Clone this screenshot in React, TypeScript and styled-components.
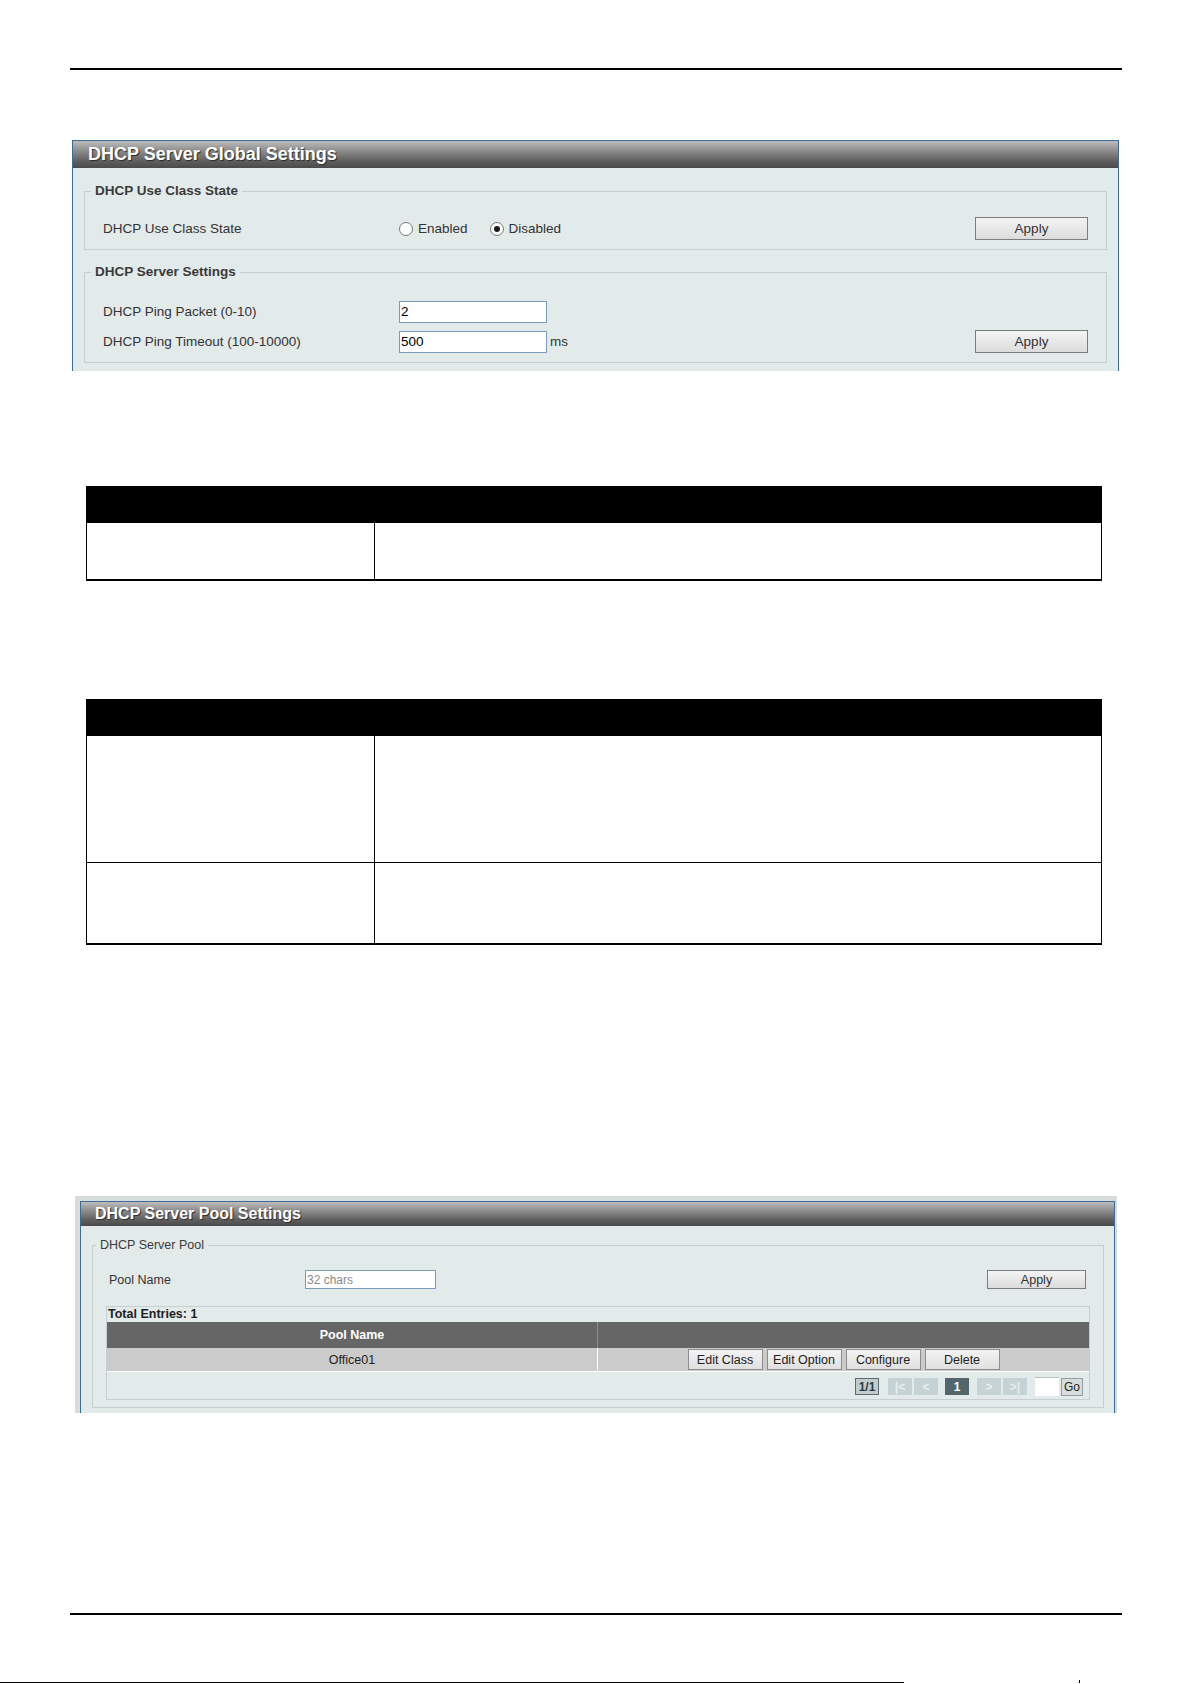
import React from 'react';
import styled, { createGlobalStyle } from 'styled-components';

const GlobalStyle = createGlobalStyle`
  html,
  body {
    margin: 0;
    padding: 0;
    background: #ffffff;
  }
  body {
    font-family: 'Liberation Sans', Arial, sans-serif;
    color: #333333;
  }
`;

/* page frame */
const Page = styled.div`
  width: 1192px;
  height: 1684px;
  display: flex;
  flex-direction: column;
  overflow: hidden;
`;

const Sheet = styled.div`
  flex: 1;
  display: flex;
  flex-direction: column;
  padding: 68px 70px 0;
`;

const Rule = styled.div<{ $top: number }>`
  height: 2px;
  margin-top: ${(p) => p.$top}px;
  background: #000000;
`;

const EdgeRow = styled.div`
  display: flex;
  align-items: flex-end;
  height: 4px;
  padding-bottom: 1px;
`;

const EdgeLine = styled.div`
  width: 904px;
  height: 1px;
  background: #000000;
`;

const EdgeTick = styled.div`
  width: 1px;
  height: 3px;
  margin-left: 175px;
  background: #000000;
`;

/* ---------- web ui panels ---------- */
const PanelFrame = styled.div<{ $top: number; $left: number; $width: number; $framed?: boolean }>`
  margin: ${(p) => p.$top}px 0 0 ${(p) => p.$left}px;
  width: ${(p) => p.$width}px;
  box-sizing: border-box;
  padding: ${(p) => (p.$framed ? '5px 2px 0 5px' : '0')};
  background: ${(p) => (p.$framed ? '#d9dcdc' : 'transparent')};
`;

const Panel = styled.section`
  border: 1px solid #3c6c96;
  border-bottom: none;
  background: #e3eaea;
`;

const PanelHeader = styled.div<{ $compact?: boolean }>`
  height: ${(p) => (p.$compact ? 24 : 27)}px;
  display: flex;
  align-items: center;
  padding-left: ${(p) => (p.$compact ? 14 : 15)}px;
  background: linear-gradient(to bottom, #bdbdbd 0%, #8e8e8e 35%, #5e5e5e 75%, #4a4a4a 100%);
  color: #ffffff;
  font-weight: 700;
  font-size: ${(p) => (p.$compact ? 16 : 18)}px;
  text-shadow: 1px 1px 1px #2a2a2a;
  white-space: nowrap;
`;

const PanelBody = styled.div<{ $compact?: boolean }>`
  padding: ${(p) => (p.$compact ? '12px 10px 5px 11px' : '15px 11px 8px 11px')};
`;

const Group = styled.fieldset<{ $compact?: boolean }>`
  margin: 0;
  padding: ${(p) => (p.$compact ? '0 0 7px 3px' : '0 0 9px 6px')};
  border: 1px solid #c4cfd2;
  min-width: 0;

  & + & {
    margin-top: 14px;
  }
`;

const Legend = styled.legend<{ $compact?: boolean }>`
  padding: 0 4px;
  font-size: ${(p) => (p.$compact ? 12.5 : 13.5)}px;
  font-weight: ${(p) => (p.$compact ? 400 : 700)};
  line-height: ${(p) => (p.$compact ? 15 : 16)}px;
  color: #3a3a3a;
`;

const FormRow = styled.div<{ $top: number; $label: number; $compact?: boolean }>`
  display: grid;
  grid-template-columns: ${(p) => p.$label}px 1fr auto;
  align-items: center;
  height: ${(p) => (p.$compact ? 19 : 23)}px;
  margin-top: ${(p) => p.$top}px;
  padding: ${(p) => (p.$compact ? '0 17px 0 13px' : '0 18px 0 12px')};
  font-size: ${(p) => (p.$compact ? 12.5 : 13.5)}px;
  color: #333333;
`;

const Controls = styled.div`
  display: flex;
  align-items: center;
`;

const RadioOption = styled.label`
  display: flex;
  align-items: center;
  gap: 5px;
  margin-right: 22px;
`;

const RadioDot = styled.span<{ $checked?: boolean }>`
  position: relative;
  width: 12px;
  height: 12px;
  border: 1px solid #7b7b7b;
  border-radius: 50%;
  background: radial-gradient(circle at 40% 35%, #ffffff 55%, #e6e6e6 100%);

  &::after {
    content: '';
    display: ${(p) => (p.$checked ? 'block' : 'none')};
    position: absolute;
    left: 3px;
    top: 3px;
    width: 6px;
    height: 6px;
    border-radius: 50%;
    background: #1a1a1a;
  }
`;

const TextBox = styled.div<{ $width: number; $compact?: boolean }>`
  width: ${(p) => p.$width}px;
  height: ${(p) => (p.$compact ? 19 : 22)}px;
  box-sizing: border-box;
  display: flex;
  align-items: center;
  padding-left: 1px;
  border: 1px solid #7a9cbc;
  background: #ffffff;
  color: ${(p) => (p.$compact ? '#8a8a8a' : '#000000')};
  font-size: ${(p) => (p.$compact ? 12 : 13.5)}px;
`;

const Unit = styled.span`
  margin-left: 3px;
`;

const ApplyButton = styled.button<{ $width: number; $compact?: boolean }>`
  width: ${(p) => p.$width}px;
  height: ${(p) => (p.$compact ? 19 : 23)}px;
  padding: 0;
  border: 1px solid #7c7c7c;
  background: linear-gradient(to bottom, #f4f4f4, #dcdcdc);
  font-family: inherit;
  font-size: ${(p) => (p.$compact ? 12.5 : 13.5)}px;
  color: #333333;
`;

/* ---------- document tables ---------- */
const DocTable = styled.table<{ $top: number }>`
  margin: ${(p) => p.$top}px 0 0 16px;
  width: 1016px;
  border-collapse: collapse;
  table-layout: fixed;
  border: 1px solid #000000;
  border-bottom-width: 2px;

  & th {
    height: 35px;
    padding: 0;
    background: #000000;
  }

  & td {
    padding: 0;
    border: 1px solid #000000;
  }
`;

const KeyColumn = styled.col`
  width: 288px;
`;

const DocRow = styled.tr<{ $height: number }>`
  height: ${(p) => p.$height}px;
`;

/* ---------- pool list ---------- */
const ListBox = styled.div`
  margin: 17px 13px 0 10px;
  border: 1px solid #c6d0d3;
  font-size: 12.5px;
`;

const TotalLine = styled.div`
  height: 15px;
  line-height: 15px;
  padding-left: 1px;
  font-weight: 700;
  color: #1e1e1e;
`;

const ListGrid = styled.div`
  display: grid;
  grid-template-columns: 490px 1fr;
`;

const HeadCell = styled.div<{ $divider?: boolean }>`
  height: 26px;
  display: flex;
  align-items: center;
  justify-content: center;
  background: #666666;
  border-left: ${(p) => (p.$divider ? '1px solid #8c8c8c' : 'none')};
  color: #ffffff;
  font-weight: 700;
`;

const DataCell = styled.div<{ $divider?: boolean }>`
  height: 23px;
  display: flex;
  align-items: center;
  justify-content: center;
  gap: 4px;
  background: #cbcbcb;
  border-left: ${(p) => (p.$divider ? '1px solid #ffffff' : 'none')};
  border-bottom: 1px solid #ffffff;
  color: #222222;
`;

const RowButton = styled.button`
  width: 75px;
  height: 21px;
  padding: 0;
  border: 1px solid #8d8d8d;
  background: linear-gradient(to bottom, #f3f3f3, #e0e0e0);
  font-family: inherit;
  font-size: 12.5px;
  color: #222222;
`;

const Pager = styled.div`
  display: flex;
  justify-content: flex-end;
  align-items: center;
  height: 27px;
  padding: 2px 6px 0 0;
  box-sizing: border-box;
`;

const PageBox = styled.span<{ $kind: 'count' | 'off' | 'current'; $gap: number }>`
  width: 24px;
  height: 17px;
  margin-left: ${(p) => p.$gap}px;
  box-sizing: border-box;
  display: flex;
  align-items: center;
  justify-content: center;
  font-size: 12px;
  font-weight: 700;
  background: ${(p) => (p.$kind === 'current' ? '#51676c' : p.$kind === 'count' ? '#c2ccce' : '#c6d3d6')};
  border: 1px solid ${(p) => (p.$kind === 'count' ? '#5d6c70' : 'transparent')};
  color: ${(p) => (p.$kind === 'current' ? '#ffffff' : p.$kind === 'count' ? '#2e3a3d' : '#e9efef')};
`;

const GoInput = styled.span`
  width: 24px;
  height: 19px;
  margin-left: 8px;
  box-sizing: border-box;
  background: #ffffff;
  border-top: 1px solid #b8c2c4;
`;

const GoButton = styled.span`
  width: 22px;
  height: 18px;
  margin-left: 2px;
  box-sizing: border-box;
  display: flex;
  align-items: center;
  justify-content: center;
  border: 1px solid #93a0a3;
  background: #d7dddd;
  font-size: 12px;
  color: #222222;
`;

const App = (): JSX.Element => {
  const actions = ['Edit Class', 'Edit Option', 'Configure', 'Delete'];

  return (
    <Page>
      <GlobalStyle />
      <Sheet>
        <Rule $top={0} />

        {/* 1. global settings */}
        <PanelFrame $top={70} $left={2} $width={1047}>
          <Panel>
            <PanelHeader>DHCP Server Global Settings</PanelHeader>
            <PanelBody>
              <Group>
                <Legend>DHCP Use Class State</Legend>
                <FormRow $top={18} $label={296}>
                  <span>DHCP Use Class State</span>
                  <Controls>
                    <RadioOption>
                      <RadioDot />
                      Enabled
                    </RadioOption>
                    <RadioOption>
                      <RadioDot $checked />
                      Disabled
                    </RadioOption>
                  </Controls>
                  <ApplyButton type="button" $width={113}>
                    Apply
                  </ApplyButton>
                </FormRow>
              </Group>

              <Group>
                <Legend>DHCP Server Settings</Legend>
                <FormRow $top={20} $label={296}>
                  <span>DHCP Ping Packet (0-10)</span>
                  <Controls>
                    <TextBox $width={148}>2</TextBox>
                  </Controls>
                  <span />
                </FormRow>
                <FormRow $top={7} $label={296}>
                  <span>DHCP Ping Timeout (100-10000)</span>
                  <Controls>
                    <TextBox $width={148}>500</TextBox>
                    <Unit>ms</Unit>
                  </Controls>
                  <ApplyButton type="button" $width={113}>
                    Apply
                  </ApplyButton>
                </FormRow>
              </Group>
            </PanelBody>
          </Panel>
        </PanelFrame>

        {/* 2. parameter tables */}
        <DocTable $top={115}>
          <colgroup>
            <KeyColumn />
            <col />
          </colgroup>
          <thead>
            <tr>
              <th colSpan={2} aria-label="header" />
            </tr>
          </thead>
          <tbody>
            <DocRow $height={57}>
              <td />
              <td />
            </DocRow>
          </tbody>
        </DocTable>

        <DocTable $top={118}>
          <colgroup>
            <KeyColumn />
            <col />
          </colgroup>
          <thead>
            <tr>
              <th colSpan={2} aria-label="header" />
            </tr>
          </thead>
          <tbody>
            <DocRow $height={127}>
              <td />
              <td />
            </DocRow>
            <DocRow $height={82}>
              <td />
              <td />
            </DocRow>
          </tbody>
        </DocTable>

        {/* 3. pool settings */}
        <PanelFrame $top={251} $left={5} $width={1042} $framed>
          <Panel>
            <PanelHeader $compact>DHCP Server Pool Settings</PanelHeader>
            <PanelBody $compact>
              <Group $compact>
                <Legend $compact>DHCP Server Pool</Legend>
                <FormRow $top={17} $label={196} $compact>
                  <span>Pool Name</span>
                  <Controls>
                    <TextBox $width={131} $compact>
                      32 chars
                    </TextBox>
                  </Controls>
                  <ApplyButton type="button" $width={99} $compact>
                    Apply
                  </ApplyButton>
                </FormRow>

                <ListBox>
                  <TotalLine>Total Entries: 1</TotalLine>
                  <ListGrid>
                    <HeadCell>Pool Name</HeadCell>
                    <HeadCell $divider />
                    <DataCell>Office01</DataCell>
                    <DataCell $divider>
                      {actions.map((label) => (
                        <RowButton key={label} type="button">
                          {label}
                        </RowButton>
                      ))}
                    </DataCell>
                  </ListGrid>
                  <Pager>
                    <PageBox $kind="count" $gap={0}>
                      1/1
                    </PageBox>
                    <PageBox $kind="off" $gap={9}>
                      |&lt;
                    </PageBox>
                    <PageBox $kind="off" $gap={2}>
                      &lt;
                    </PageBox>
                    <PageBox $kind="current" $gap={7}>
                      1
                    </PageBox>
                    <PageBox $kind="off" $gap={8}>
                      &gt;
                    </PageBox>
                    <PageBox $kind="off" $gap={2}>
                      &gt;|
                    </PageBox>
                    <GoInput />
                    <GoButton>Go</GoButton>
                  </Pager>
                </ListBox>
              </Group>
            </PanelBody>
          </Panel>
        </PanelFrame>

        <Rule $top={200} />
      </Sheet>
      <EdgeRow>
        <EdgeLine />
        <EdgeTick />
      </EdgeRow>
    </Page>
  );
};

export default App;
